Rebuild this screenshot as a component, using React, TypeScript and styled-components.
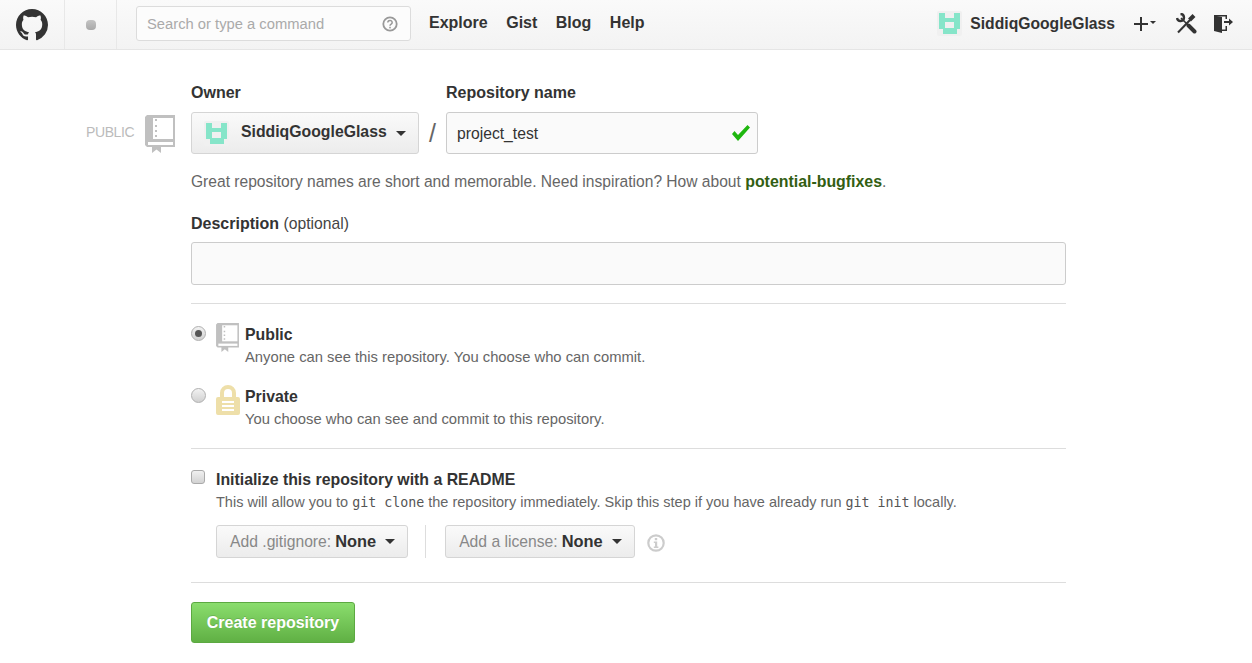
import React from "react";
import styled, { createGlobalStyle } from "styled-components";

const Global = createGlobalStyle`
  html, body { margin: 0; padding: 0; background: #fff; }
  body { font-family: "Liberation Sans", Arial, sans-serif; font-size: 14px; color: #333; overflow: hidden; }
  * { box-sizing: border-box; }
`;

const Header = styled.header`
  height: 50px;
  display: flex;
  align-items: stretch;
  background: linear-gradient(#fafafa, #f3f3f3);
  border-bottom: 1px solid #e5e5e5;
`;
const LogoCell = styled.div`
  width: 65px;
  padding-left: 16px;
  display: flex;
  align-items: center;
  border-right: 1px solid #e8e8e8;
`;
const DotCell = styled.div`
  width: 52px;
  display: flex;
  align-items: center;
  justify-content: center;
  border-right: 1px solid #e8e8e8;
`;
const Dot = styled.span`
  width: 10px;
  height: 10px;
  border-radius: 4px;
  background: linear-gradient(#c4c4c4, #a9a9a9);
`;
const SearchBox = styled.div`
  width: 275px;
  height: 35px;
  margin: 6px 0 0 19px;
  padding: 0 12px 0 10px;
  display: flex;
  align-items: center;
  justify-content: space-between;
  background: #fcfcfc;
  border: 1px solid #dcdcdc;
  border-radius: 3px;
  color: #aaa;
  font-size: 14.750px;
`;
const Nav = styled.nav`
  display: flex;
  gap: 18.500px;
  margin-left: 18px;
  padding-bottom: 4px;
  align-items: center;
  font-weight: bold;
  font-size: 16px;
  color: #333;
`;
const UserArea = styled.div`
  margin-left: auto;
  padding-right: 19px;
  padding-bottom: 2px;
  display: flex;
  align-items: center;
`;
const Avatar = styled.svg`
  display: block;
  flex: none;
`;
const UserName = styled.span`
  font-weight: bold;
  font-size: 15.700px;
  color: #333;
  margin-left: 8px;
  margin-right: 19px;
`;
const PlusWrap = styled.span`
  display: flex;
  align-items: center;
  margin-right: 20px;
`;
const IconBox = styled.svg`
  display: block;
  flex: none;
`;
const ExitIcon = styled(IconBox)`
  margin-left: 17px;
`;
const SmallCaret = styled.span`
  width: 0;
  height: 0;
  margin: 0 0 3px 2px;
  border: 3px solid transparent;
  border-top-color: #333;
  border-bottom-width: 0;
`;

const Page = styled.main`
  display: grid;
  grid-template-columns: 191px 875px;
  padding-top: 33px;
`;
const Gutter = styled.div`
  padding: 32px 16px 0 86px;
  display: flex;
  justify-content: space-between;
`;
const PublicLabel = styled.span`
  font-size: 14px;
  color: #bbb;
  line-height: 16px;
  padding-top: 9px;
  letter-spacing: -0.4px;
`;
const Form = styled.div`
  display: flex;
  flex-direction: column;
`;
const NameRow = styled.div`
  display: flex;
  align-items: flex-end;
`;
const Field = styled.div`
  display: flex;
  flex-direction: column;
`;
const Label = styled.label`
  font-size: 16px;
  font-weight: bold;
  color: #333;
  line-height: 20px;
  margin-bottom: 9px;
`;
const OwnerButton = styled.div`
  width: 228px;
  height: 42px;
  display: flex;
  align-items: center;
  padding-left: 12px;
  background: linear-gradient(#fafafa, #ececec);
  border: 1px solid #d5d5d5;
  border-radius: 3px;
  font-weight: bold;
  font-size: 15.800px;
  color: #333;
`;
const OwnerName = styled.span`
  margin: 0 0 2px 12px;
`;
const Caret = styled.span`
  width: 0;
  height: 0;
  margin-left: 9px;
  border: 5px solid transparent;
  border-top-color: #333;
  border-bottom-width: 0;
`;
const Slash = styled.span`
  width: 27px;
  height: 42px;
  font-size: 25px;
  line-height: 42px;
  text-align: center;
  color: #666;
`;
const NameInput = styled.div`
  width: 312px;
  height: 42px;
  padding: 0 7px 0 10px;
  display: flex;
  align-items: center;
  justify-content: space-between;
  background: #fafafa;
  border: 1px solid #ccc;
  border-radius: 3px;
  font-size: 15.700px;
  color: #333;
  span { padding-top: 2px; }
`;
const Hint = styled.p`
  margin: 18px 0 0;
  font-size: 15.580px;
  line-height: 20px;
  color: #666;
  strong { color: #325e12; font-size: 15.900px; }
`;
const DescLabel = styled.div`
  margin-top: 22px;
  font-size: 16px;
  line-height: 20px;
  color: #333;
  b { font-weight: bold; }
  span { font-size: 15.700px; color: #444; }
`;
const DescInput = styled.div`
  height: 43px;
  margin-top: 8px;
  background: #fafafa;
  border: 1px solid #ccc;
  border-radius: 3px;
`;
const Rule = styled.hr<{ $top: number }>`
  width: 100%;
  margin: ${(p) => p.$top}px 0 0;
  border: 0;
  border-top: 1px solid #ddd;
`;
const Choice = styled.div<{ $top: number }>`
  display: flex;
  margin-top: ${(p) => p.$top}px;
`;
const Radio = styled.span<{ $on?: boolean }>`
  width: 15px;
  height: 15px;
  margin: 3px 10px 0 0;
  border-radius: 50%;
  flex: none;
  display: flex;
  align-items: center;
  justify-content: center;
  background: linear-gradient(#f2f2f2, #d0d0d0);
  border: 1px solid #b0b0b0;
  &::after {
    content: "";
    width: 7px;
    height: 7px;
    border-radius: 50%;
    background: ${(p) => (p.$on ? "#555" : "transparent")};
  }
`;
const ChoiceText = styled.div<{ $gap: number }>`
  margin-left: ${(p) => p.$gap}px;
  padding-top: 2px;
`;
const ChoiceTitle = styled.div`
  font-size: 15.850px;
  font-weight: bold;
  line-height: 20px;
  color: #333;
`;
const Note = styled.div<{ $size: number }>`
  font-size: ${(p) => p.$size}px;
  line-height: 20px;
  color: #666;
  margin-top: 2px;
  code { font-family: "DejaVu Sans Mono", monospace; font-size: 13.300px; color: #555; }
`;
const InitRow = styled.div`
  display: flex;
  margin-top: 21px;
`;
const Check = styled.span`
  width: 14px;
  height: 14px;
  margin: 0 11px 0 0;
  flex: none;
  background: linear-gradient(#f0f0f0, #d2d2d2);
  border: 1px solid #aaa;
  border-radius: 3px;
`;
const SelectRow = styled.div`
  display: flex;
  align-items: center;
  margin: 12px 0 0 25px;
`;
const SelectButton = styled.div`
  height: 33px;
  padding: 0 12px 0 13px;
  display: flex;
  align-items: center;
  background: linear-gradient(#fafafa, #ececec);
  border: 1px solid #d5d5d5;
  border-radius: 3px;
  font-size: 15.700px;
  color: #888;
  b { color: #333; margin-left: 4px; font-size: 16.400px; }
`;
const VSep = styled.span`
  width: 1px;
  height: 33px;
  background: #ddd;
  margin: 0 19px 0 17px;
`;
const InfoIcon = styled.svg`
  display: block;
  margin-left: 12px;
  margin-top: 3px;
`;
const CreateButton = styled.button`
  width: 164px;
  height: 41px;
  margin-top: 19px;
  padding: 0;
  background: linear-gradient(#8add6d, #60b044);
  border: 1px solid #5ca941;
  border-radius: 3px;
  color: #fff;
  font-family: inherit;
  font-weight: bold;
  font-size: 16px;
  text-shadow: 0 -1px 0 rgba(0, 0, 0, 0.15);
`;

const Identicon = () => (
  <Avatar width={25} height={25} viewBox="0 0 25 25">
    <rect width="25" height="25" rx="2" fill="#f0f0f0" />
    <path fill="#86e5c9" d="M2 2h6v5h9V2h6v16h-3v5H6v-5H2zM8 11v6h9v-6z" />
  </Avatar>
);

const Book = ({ w, h }: { w: number; h: number }) => (
  <IconBox width={w} height={h} viewBox="0 0 30 38">
    <path fill="#c0c0c0" d="M2 0h28v32H16v6l-4.500-3.500L7 38v-6H2l-2-2V2z" />
    <path fill="#fff" d="M8 3h20v21H8z" />
    <path fill="#fff" d="M3 27h25v3H3z" />
    <path fill="#c0c0c0" d="M10 4h2v2h-2zM10 10h2v2h-2zM10 15h2v2h-2zM10 20h2v2h-2z" />
  </IconBox>
);

const Lock = () => (
  <IconBox width={24} height={30} viewBox="0 0 24 30">
    <path
      fill="#eedfa9"
      d="M4 12V8a8 8 0 0 1 16 0v4h2a2 2 0 0 1 2 2v14a2 2 0 0 1-2 2H2a2 2 0 0 1-2-2V14a2 2 0 0 1 2-2zm4 0h8V8a4 4 0 0 0-8 0z"
    />
    <path fill="#fff" d="M6 16h12v2H6zM6 20h12v2H6zM6 24h12v2H6z" />
  </IconBox>
);

export default function App() {
  return (
    <>
      <Global />
      <Header>
        <LogoCell>
          <IconBox width="32" height="32" viewBox="0 0 16 16">
            <path
              fill="#333"
              d="M8 0C3.58 0 0 3.58 0 8c0 3.54 2.29 6.53 5.47 7.59.4.07.55-.17.55-.38 0-.19-.01-.82-.01-1.49-2.01.37-2.53-.49-2.69-.94-.09-.23-.48-.94-.82-1.13-.28-.15-.68-.52-.01-.53.63-.01 1.08.58 1.23.82.72 1.21 1.87.87 2.33.66.07-.52.28-.87.51-1.07-1.78-.2-3.64-.89-3.64-3.95 0-.87.31-1.59.82-2.15-.08-.2-.36-1.02.08-2.12 0 0 .67-.21 2.2.82.64-.18 1.32-.27 2-.27.68 0 1.36.09 2 .27 1.53-1.04 2.2-.82 2.2-.82.44 1.1.16 1.92.08 2.12.51.56.82 1.27.82 2.15 0 3.07-1.87 3.75-3.65 3.95.29.25.54.73.54 1.48 0 1.07-.01 1.93-.01 2.2 0 .21.15.46.55.38A8.013 8.013 0 0016 8c0-4.42-3.58-8-8-8z"
            />
          </IconBox>
        </LogoCell>
        <DotCell>
          <Dot />
        </DotCell>
        <SearchBox>
          <span>Search or type a command</span>
          <IconBox width="16" height="16" viewBox="0 0 16 16">
            <circle cx="8" cy="8" r="6.700" fill="none" stroke="#999" strokeWidth="1.800" />
            <path d="M5.800 6.500a2.200 2 0 1 1 3.400 1.600c-.8.5-1.200.9-1.200 1.600" fill="none" stroke="#999" strokeWidth="1.500" />
            <rect x="7.200" y="10.800" width="1.600" height="1.600" fill="#999" />
          </IconBox>
        </SearchBox>
        <Nav>
          <span>Explore</span>
          <span>Gist</span>
          <span>Blog</span>
          <span>Help</span>
        </Nav>
        <UserArea>
          <Identicon />
          <UserName>SiddiqGoogleGlass</UserName>
          <PlusWrap>
            <IconBox width="14" height="14" viewBox="0 0 14 14">
              <path fill="#333" d="M6 0h2v6h6v2H8v6H6V8H0V6h6z" />
            </IconBox>
            <SmallCaret />
          </PlusWrap>
          <IconBox width="21" height="21" viewBox="0 0 21 21">
            <path d="M4.500 1A3.500 3.500 0 1 1 1 5" fill="none" stroke="#333" strokeWidth="2.400" />
            <path d="M5 5l8 8" stroke="#333" strokeWidth="1.600" />
            <path d="M12.500 12.500l6 6" stroke="#333" strokeWidth="4" strokeLinecap="round" />
            <path d="M18 2.500l-4.500 4.500" stroke="#333" strokeWidth="4" />
            <path d="M14 7L2 19.500" stroke="#333" strokeWidth="2" />
          </IconBox>
          <ExitIcon width="19" height="18" viewBox="0 0 19 18">
            <path fill="#333" d="M0 .5L8 2v16l-8-2z" />
            <path fill="#333" d="M0 0h13v4h-1.500V1.500H0zM8 14.500h3.500V11H13v5H8z" />
            <path fill="#333" d="M10 6h5V3.500L19 7l-4 3.500V8h-5z" />
          </ExitIcon>
        </UserArea>
      </Header>
      <Page>
        <Gutter>
          <PublicLabel>PUBLIC</PublicLabel>
          <Book w={30} h={38} />
        </Gutter>
        <Form>
          <NameRow>
            <Field>
              <Label>Owner</Label>
              <OwnerButton>
                <Identicon />
                <OwnerName>SiddiqGoogleGlass</OwnerName>
                <Caret />
              </OwnerButton>
            </Field>
            <Slash>/</Slash>
            <Field>
              <Label>Repository name</Label>
              <NameInput>
                <span>project_test</span>
                <IconBox width="18" height="16" viewBox="0 0 18 16">
                  <path fill="#1fb70f" d="M0 9l2.500-3L6 10 15.500 0 18 2.500 6 16z" />
                </IconBox>
              </NameInput>
            </Field>
          </NameRow>
          <Hint>
            Great repository names are short and memorable. Need inspiration? How about{" "}
            <strong>potential-bugfixes</strong>.
          </Hint>
          <DescLabel>
            <b>Description</b> <span>(optional)</span>
          </DescLabel>
          <DescInput />
          <Rule $top={18} />
          <Choice $top={19}>
            <Radio $on />
            <Book w={23} h={29} />
            <ChoiceText $gap={6}>
              <ChoiceTitle>Public</ChoiceTitle>
              <Note $size={14.77}>Anyone can see this repository. You choose who can commit.</Note>
            </ChoiceText>
          </Choice>
          <Choice $top={18}>
            <Radio />
            <Lock />
            <ChoiceText $gap={5}>
              <ChoiceTitle>Private</ChoiceTitle>
              <Note $size={14.77}>You choose who can see and commit to this repository.</Note>
            </ChoiceText>
          </Choice>
          <Rule $top={19} />
          <InitRow>
            <Check />
            <div>
              <ChoiceTitle>Initialize this repository with a README</ChoiceTitle>
              <Note $size={14.5}>
                This will allow you to <code>git clone</code> the repository immediately. Skip this step if you have
                already run <code>git init</code> locally.
              </Note>
            </div>
          </InitRow>
          <SelectRow>
            <SelectButton>
              Add .gitignore: <b>None</b>
              <Caret />
            </SelectButton>
            <VSep />
            <SelectButton>
              Add a license: <b>None</b>
              <Caret />
            </SelectButton>
            <InfoIcon width="18" height="18" viewBox="0 0 18 18">
              <circle cx="9" cy="9" r="7.700" fill="none" stroke="#ccc" strokeWidth="2.200" />
              <path fill="#ccc" d="M7.800 4h2.400v2.200H7.800zM6.800 7.500h3.400V12.500h1.200V14H6.800v-1.500H8V9H6.800z" />
            </InfoIcon>
          </SelectRow>
          <Rule $top={24} />
          <div>
            <CreateButton>Create repository</CreateButton>
          </div>
        </Form>
      </Page>
    </>
  );
}
